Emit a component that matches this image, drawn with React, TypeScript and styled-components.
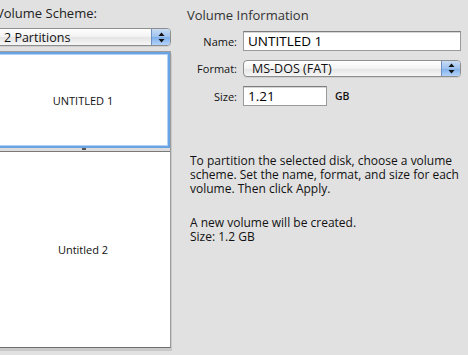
import React from "react";
import styled, { createGlobalStyle } from "styled-components";

const Global = createGlobalStyle`
  html, body { margin: 0; padding: 0; background: #e1e1e1; }
  body { font-family: "Open Sans", "DejaVu Sans", sans-serif; color: #111; }
`;

const Window = styled.div`
  width: 468px;
  height: 355px;
  overflow: hidden;
  background: #e1e1e1;
  display: flex;
  flex-direction: row;
  gap: 16px;
`;

const LeftColumn = styled.div`
  width: 175px;
  margin-left: -4px;
  display: flex;
  flex-direction: column;
  padding-top: 5px;
`;

const SectionLabel = styled.div`
  font-size: 13px;
  line-height: 16px;
  height: 16px;
  color: #222;
  white-space: nowrap;
`;

const Popup = styled.div<{ $height: number; $offset?: number }>`
  position: relative;
  height: ${(p) => p.$height}px;
  margin-top: ${(p) => p.$offset ?? 0}px;
  box-sizing: border-box;
  border: 1px solid #8e8e8e;
  border-radius: 4px;
  background: linear-gradient(#ffffff 0%, #f3f3f3 50%, #e4e4e4 51%, #f6f6f6 100%);
  display: flex;
  align-items: center;
  font-size: 12.5px;
  color: #111;
  overflow: hidden;
  box-shadow: 0 1px 0 rgba(0, 0, 0, 0.08);
`;

const PopupText = styled.span<{ $pad: number }>`
  flex: 1;
  padding-left: ${(p) => p.$pad}px;
  white-space: nowrap;
`;

const PopupArrows = styled.span`
  width: 18px;
  align-self: stretch;
  background: linear-gradient(#c9dcf5 0%, #9dc1ee 50%, #7eaee9 51%, #b3d3fa 100%);
  border-left: 1px solid #6d8fc2;
  display: flex;
  align-items: center;
  justify-content: center;
`;

const Arrows = () => (
  <svg width="7" height="11" viewBox="0 0 7 11">
    <path d="M3.5 0.5 L6.5 4 L0.5 4 Z" fill="#111" />
    <path d="M3.5 10.5 L6.5 7 L0.5 7 Z" fill="#111" />
  </svg>
);

const PartitionMap = styled.div`
  margin-top: 5px;
  height: 295px;
  display: flex;
  flex-direction: column;
  border-top: 1px solid #9c9c9c;
  border-right: 1px solid #9c9c9c;
  border-bottom: 1px solid #6f6f6f;
  box-shadow: 1px 3px 0 #c9c9c9;
  background: #fff;
`;

const Partition = styled.div<{ $selected?: boolean; $size: string }>`
  flex: ${(p) => p.$size};
  box-sizing: border-box;
  background: #fff;
  display: flex;
  align-items: center;
  justify-content: center;
  font-size: 11px;
  color: #111;
  border: ${(p) => (p.$selected ? "2px solid #6aa3e3" : "none")};
  box-shadow: ${(p) => (p.$selected ? "inset 0 0 0 1px #b4d2f2" : "none")};
`;

const Splitter = styled.div`
  position: relative;
  height: 3px;
  background: #dcdcdc;
  border-bottom: 1px solid #7a7a7a;
`;

const SplitHandle = styled.span`
  position: absolute;
  left: 86px;
  top: 0;
  width: 4px;
  height: 2px;
  background: #555;
`;

const RightColumn = styled.div`
  flex: 1;
  display: flex;
  flex-direction: column;
  padding-top: 7px;
`;

const Heading = styled.div`
  font-size: 13px;
  line-height: 16px;
  color: #333;
`;

const Form = styled.div`
  margin-top: 8px;
  display: grid;
  grid-template-columns: 50px 218px;
  column-gap: 6px;
  row-gap: 9px;
  align-items: center;
`;

const Label = styled.div`
  text-align: right;
  font-size: 11px;
  color: #111;
`;

const TextField = styled.div<{ $width?: string }>`
  width: ${(p) => p.$width ?? "100%"};
  height: 20px;
  box-sizing: border-box;
  background: #fff;
  border: 1px solid #9a9a9a;
  border-top-color: #7d7d7d;
  box-shadow: inset 0 1px 0 #d6d6d6;
  font-size: 13.5px;
  line-height: 18px;
  padding-left: 4px;
  color: #000;
`;

const FieldRow = styled.div`
  display: flex;
  align-items: center;
  gap: 8px;
`;

const Unit = styled.span`
  font-size: 10.5px;
  font-weight: 600;
  color: #111;
`;

const Description = styled.div`
  margin-top: 48px;
  padding-left: 3px;
  font-size: 12px;
  line-height: 14px;
  color: #111;
  white-space: nowrap;
  display: flex;
  flex-direction: column;
  gap: 20px;
`;

export default function App() {
  return (
    <>
      <Global />
      <Window>
        <LeftColumn>
          <SectionLabel>Volume Scheme:</SectionLabel>
          <Popup $height={18} $offset={7}>
            <PopupText $pad={7}>2 Partitions</PopupText>
            <PopupArrows>
              <Arrows />
            </PopupArrows>
          </Popup>
          <PartitionMap>
            <Partition $selected $size="0 0 96px">UNTITLED 1</Partition>
            <Splitter>
              <SplitHandle />
            </Splitter>
            <Partition $size="1">Untitled 2</Partition>
          </PartitionMap>
        </LeftColumn>
        <RightColumn>
          <Heading>Volume Information</Heading>
          <Form>
            <Label>Name:</Label>
            <TextField>UNTITLED 1</TextField>
            <Label>Format:</Label>
            <Popup $height={17}>
              <PopupText $pad={8}>MS-DOS (FAT)</PopupText>
              <PopupArrows>
                <Arrows />
              </PopupArrows>
            </Popup>
            <Label>Size:</Label>
            <FieldRow>
              <TextField $width="84px">1.21</TextField>
              <Unit>GB</Unit>
            </FieldRow>
          </Form>
          <Description>
            <div>
              To partition the selected disk, choose a volume
              <br />
              scheme. Set the name, format, and size for each
              <br />
              volume. Then click Apply.
            </div>
            <div>
              A new volume will be created.
              <br />
              Size: 1.2 GB
            </div>
          </Description>
        </RightColumn>
      </Window>
    </>
  );
}
